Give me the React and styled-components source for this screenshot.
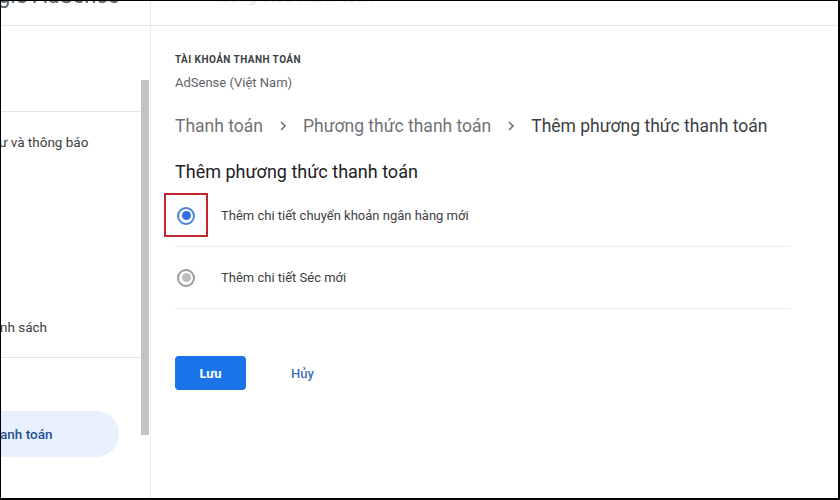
import React from 'react'
import styled, { createGlobalStyle } from 'styled-components'

const GlobalStyle = createGlobalStyle`
  html, body {
    margin: 0;
    padding: 0;
    background: #fff;
  }
  body {
    font-family: Roboto, "Noto Sans", "Liberation Sans", sans-serif;
    color: #3c4043;
  }
`

const Frame = styled.div`
  width: 840px;
  height: 500px;
  box-sizing: border-box;
  border: 1px solid #000;
  border-bottom-width: 2px;
  border-right-width: 2px;
  display: flex;
  flex-direction: column;
  overflow: hidden;
  background: #fff;
`

const TopBar = styled.header`
  height: 24px;
  flex: none;
  display: flex;
  border-bottom: 1px solid #e6e6e6;
  overflow: hidden;
`

const LogoCell = styled.div`
  width: 149px;
  flex: none;
  border-right: 1px solid #ececec;
  overflow: hidden;
`

const Logo = styled.span`
  display: block;
  margin: -18px 0 0 -3px;
  font-size: 22px;
  line-height: 26px;
  color: #5f6368;
  white-space: nowrap;
`

const PageTitle = styled.span`
  display: block;
  margin: -14px 0 0 50px;
  font-size: 16px;
  line-height: 20px;
  color: #e4e4e4;
  white-space: nowrap;
`

const Body = styled.div`
  flex: 1;
  display: flex;
  min-height: 0;
`

const Sidebar = styled.nav`
  width: 149px;
  flex: none;
  display: flex;
  border-right: 1px solid #ececec;
`

const NavList = styled.div`
  flex: 1;
  display: flex;
  flex-direction: column;
  overflow: hidden;
`

const NavDivider = styled.div`
  height: 1px;
  background: #e3e3e3;
  margin: ${p => p.$top}px 0 0 0;
`

const NavItem = styled.div`
  display: flex;
  align-items: center;
  height: 46px;
  margin-top: ${p => p.$top}px;
  width: ${p => (p.$active ? '118px' : 'auto')};
  border-radius: 0 23px 23px 0;
  background: ${p => (p.$active ? '#e8f0fe' : 'transparent')};
  color: ${p => (p.$active ? '#1f4f93' : '#3c4043')};
  font-size: 13.5px;
  font-weight: ${p => (p.$active ? 500 : 400)};
  white-space: nowrap;
  span {
    margin-left: ${p => p.$shift}px;
  }
`

const ScrollTrack = styled.div`
  width: 8px;
  flex: none;
  margin-right: 1px;
`

const ScrollThumb = styled.div`
  margin-top: 54px;
  height: 355px;
  background: #c3c3c3;
`

const Main = styled.main`
  flex: 1;
  padding: 28px 0 0 24px;
  display: flex;
  flex-direction: column;
`

const Eyebrow = styled.div`
  font-size: 10px;
  font-weight: 700;
  letter-spacing: 0.45px;
  line-height: 12px;
  color: #3c4043;
`

const Account = styled.div`
  margin-top: 9px;
  font-size: 13px;
  line-height: 16px;
  color: #5f6368;
`

const Crumbs = styled.div`
  margin-top: 24px;
  display: flex;
  align-items: center;
  font-size: 17.5px;
  line-height: 22px;
  white-space: nowrap;
`

const Crumb = styled.span`
  color: ${p => (p.$current ? '#3c4043' : '#6f7276')};
`

const Chevron = styled.svg`
  width: 8px;
  height: 12px;
  margin: 0 16px;
  flex: none;
`

const Heading = styled.h1`
  margin: 24px 0 0;
  font-size: 18px;
  font-weight: 400;
  line-height: 22px;
  color: #202124;
`

const Options = styled.div`
  margin-top: 2px;
  width: 616px;
`

const Option = styled.label`
  position: relative;
  height: 61px;
  display: flex;
  align-items: center;
  gap: 26px;
  padding-left: 2px;
  border-bottom: 1px solid #ebebeb;
  font-size: 13px;
  color: #3c4043;
`

const Radio = styled.span`
  width: 18px;
  height: 18px;
  box-sizing: border-box;
  border-radius: 50%;
  border: 2px solid ${p => (p.$checked ? '#4a84d8' : '#9a9a9a')};
  display: flex;
  align-items: center;
  justify-content: center;
  &::after {
    content: '';
    width: 9px;
    height: 9px;
    border-radius: 50%;
    background: ${p => (p.$checked ? '#2f6fde' : '#bdbdbd')};
  }
`

const Highlight = styled.span`
  position: absolute;
  left: -11px;
  top: 8px;
  width: 44px;
  height: 44px;
  box-sizing: border-box;
  border: 2px solid #c0262c;
`

const Actions = styled.div`
  margin-top: 47px;
  display: flex;
  align-items: center;
  gap: 45px;
`

const SaveButton = styled.button`
  width: 71px;
  height: 34px;
  border: none;
  border-radius: 4px;
  background: #1a73e8;
  color: #fff;
  font-family: inherit;
  font-size: 13px;
  font-weight: 700;
`

const CancelLink = styled.span`
  font-size: 13px;
  font-weight: 500;
  color: #3f6fb4;
`

const Arrow = () => (
  <Chevron viewBox="0 0 8 12">
    <path d="M2 2l4 4-4 4" fill="none" stroke="#6f7276" strokeWidth="1.6" />
  </Chevron>
)

export default function App() {
  return (
    <>
      <GlobalStyle />
      <Frame>
        <TopBar>
          <LogoCell>
            <Logo>gle AdSense</Logo>
          </LogoCell>
          <PageTitle>Phương thức thanh toán</PageTitle>
        </TopBar>
        <Body>
          <Sidebar>
            <NavList>
              <NavDivider $top={85} />
              <NavItem $top={7} $shift={-2}><span>ư và thông báo</span></NavItem>
              <NavItem $top={139} $shift={-1}><span>nh sách</span></NavItem>
              <NavDivider $top={7} />
              <NavItem $top={53} $active $shift={-1}><span>anh toán</span></NavItem>
            </NavList>
            <ScrollTrack>
              <ScrollThumb />
            </ScrollTrack>
          </Sidebar>
          <Main>
            <Eyebrow>TÀI KHOẢN THANH TOÁN</Eyebrow>
            <Account>AdSense (Việt Nam)</Account>
            <Crumbs>
              <Crumb>Thanh toán</Crumb>
              <Arrow />
              <Crumb>Phương thức thanh toán</Crumb>
              <Arrow />
              <Crumb $current>Thêm phương thức thanh toán</Crumb>
            </Crumbs>
            <Heading>Thêm phương thức thanh toán</Heading>
            <Options>
              <Option>
                <Radio $checked />
                Thêm chi tiết chuyển khoản ngân hàng mới
                <Highlight />
              </Option>
              <Option>
                <Radio />
                Thêm chi tiết Séc mới
              </Option>
            </Options>
            <Actions>
              <SaveButton>Lưu</SaveButton>
              <CancelLink>Hủy</CancelLink>
            </Actions>
          </Main>
        </Body>
      </Frame>
    </>
  )
}
